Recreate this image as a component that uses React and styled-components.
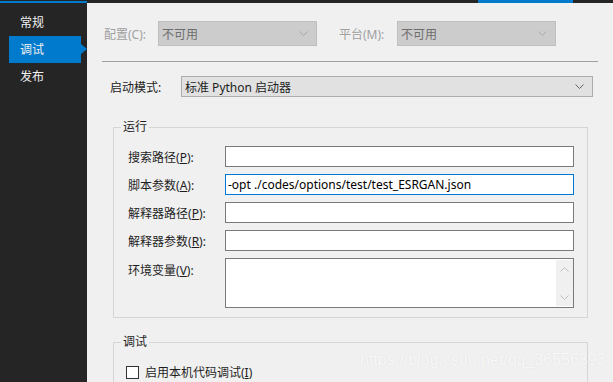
import styled, { createGlobalStyle } from 'styled-components';

const Global = createGlobalStyle`
  html, body { margin: 0; padding: 0; }
  body {
    width: 613px;
    height: 382px;
    overflow: hidden;
    background: #f0f0f0;
    font-family: "Noto Sans", "Noto Sans CJK SC", sans-serif;
    font-size: 12px;
    color: #1e1e1e;
  }
`;

const Window = styled.div`
  position: relative;
  width: 613px;
  height: 382px;
  display: flex;
  flex-direction: column;
  overflow: hidden;
`;

const Header = styled.div`
  display: flex;
  height: 3px;
  flex: none;
`;

const HeaderPart = styled.div`
  width: ${p => p.$w}px;
  flex: ${p => (p.$w ? 'none' : '1')};
  background: ${p => (p.$solid ? '#007acc' : '#252526')};
  border-bottom: 2px solid ${p => (p.$blue || p.$solid ? '#007acc' : '#252526')};
  box-sizing: border-box;
`;

const Body = styled.div`
  flex: 1;
  display: flex;
`;

const Sidebar = styled.div`
  width: 87px;
  flex: none;
  background: #252526;
  padding-top: 6px;
  display: flex;
  flex-direction: column;
`;

const NavItem = styled.div`
  position: relative;
  margin-left: 9px;
  width: 72px;
  height: 27px;
  line-height: 27px;
  padding-left: 11px;
  box-sizing: border-box;
  color: #f1f1f1;
  font-size: 12px;
  background: ${p => (p.$active ? '#007acc' : 'transparent')};

  &::after {
    content: '';
    display: ${p => (p.$active ? 'block' : 'none')};
    position: absolute;
    right: -6px;
    top: 8px;
    border-top: 5px solid transparent;
    border-bottom: 5px solid transparent;
    border-left: 6px solid #007acc;
  }
`;

const Content = styled.div`
  flex: 1;
  display: flex;
  flex-direction: column;
  background: #f0f0f0;
`;

const TopRow = styled.div`
  display: flex;
  align-items: center;
  margin-top: 18px;
  padding-left: 17px;
  height: 25px;
`;

const DimLabel = styled.span`
  color: #a0a0a0;
  width: ${p => p.$w}px;
  flex: none;
`;

const Combo = styled.div`
  width: ${p => p.$w}px;
  height: ${p => p.$h}px;
  box-sizing: border-box;
  flex: none;
  display: flex;
  align-items: center;
  justify-content: space-between;
  padding: 0 8px 0 3px;
  background: ${p => (p.$disabled ? '#cccccc' : '#e1e1e1')};
  border: 1px solid ${p => (p.$disabled ? '#bfbfbf' : '#adadad')};
  color: ${p => (p.$disabled ? '#6d6d6d' : '#1e1e1e')};
  margin-right: ${p => p.$mr || 0}px;
`;

const Chevron = ({ color }) => (
  <svg width="9" height="5" viewBox="0 0 9 5">
    <path d="M0.5 0.5 L4.5 4.5 L8.5 0.5" fill="none" stroke={color} strokeWidth="1" />
  </svg>
);

const Separator = styled.div`
  margin: 15px 0 0 15px;
  width: 496px;
  height: 1px;
  background: #a0a0a0;
`;

const ModeRow = styled.div`
  display: flex;
  align-items: center;
  margin-top: 14px;
  padding-left: 23px;
`;

const ModeLabel = styled.span`
  width: 71px;
  flex: none;
`;

const Group = styled.fieldset`
  margin: ${p => p.$mt}px 0 0 26px;
  width: 475px;
  box-sizing: border-box;
  padding: 0 0 ${p => p.$pb}px 14px;
  border: 1px solid #d5d5d5;
  min-inline-size: 0;
`;

const Legend = styled.legend`
  margin-left: -7px;
  padding: 0 2px;
  line-height: 16px;
  font-size: 12px;
`;

const FieldRow = styled.div`
  display: flex;
  align-items: ${p => (p.$top ? 'flex-start' : 'center')};
  margin-top: ${p => p.$mt}px;
`;

const FieldLabel = styled.span`
  width: 97px;
  flex: none;
  padding-top: ${p => (p.$top ? '3px' : '0')};
`;

const TextBox = styled.div`
  width: 349px;
  height: 21px;
  box-sizing: border-box;
  background: #ffffff;
  border: 1px solid ${p => (p.$focus ? '#0078d7' : '#7a7a7a')};
  padding-left: 2px;
  display: flex;
  align-items: center;
  color: #000;
`;

const AreaBox = styled.div`
  width: 349px;
  height: 50px;
  box-sizing: border-box;
  background: #ffffff;
  border: 1px solid #7a7a7a;
  display: flex;
  justify-content: flex-end;
`;

const ScrollTrack = styled.div`
  width: 17px;
  background: #f0f0f0;
  display: flex;
  flex-direction: column;
  justify-content: space-between;
  align-items: center;
  padding: 7px 0 6px;
  margin: 1px 0;
  box-sizing: border-box;
`;

const CheckRow = styled.div`
  display: flex;
  align-items: center;
  margin-top: 13px;
  margin-left: -2px;
`;

const CheckBox = styled.div`
  width: 13px;
  height: 13px;
  box-sizing: border-box;
  border: 1px solid #333333;
  background: #ffffff;
  margin-right: 6px;
`;

const Watermark = styled.div`
  position: absolute;
  left: 360px;
  top: 351px;
  font-family: "Liberation Sans", Arial, sans-serif;
  font-size: 16px;
  color: #f8f8f8;
  text-shadow: 0 0 1px #dadada;
  pointer-events: none;
`;

const Key = styled.u`
  text-underline-offset: 1px;
`;

const Lbl = ({ text, k }) => (
  <>
    {text}(<Key>{k}</Key>):
  </>
);

const App = () => (
  <Window>
    <Global />
    <Header>
      <HeaderPart $w={87} $blue />
      <HeaderPart $w={391} />
      <HeaderPart $w={95} $solid />
      <HeaderPart />
    </Header>
    <Body>
      <Sidebar>
        <NavItem>常规</NavItem>
        <NavItem $active>调试</NavItem>
        <NavItem>发布</NavItem>
      </Sidebar>
      <Content>
        <TopRow>
          <DimLabel $w={54}>配置(C):</DimLabel>
          <Combo $w={159} $h={25} $disabled $mr={22}>
            不可用
            <Chevron color="#a8a8a8" />
          </Combo>
          <DimLabel $w={58}>平台(M):</DimLabel>
          <Combo $w={159} $h={25} $disabled>
            不可用
            <Chevron color="#a8a8a8" />
          </Combo>
        </TopRow>
        <Separator />
        <ModeRow>
          <ModeLabel>启动模式:</ModeLabel>
          <Combo $w={412} $h={21}>
            标准 Python 启动器
            <Chevron color="#606060" />
          </Combo>
        </ModeRow>
        <Group $mt={22} $pb={9}>
          <Legend>运行</Legend>
          <FieldRow $mt={11}>
            <FieldLabel><Lbl text="搜索路径" k="P" /></FieldLabel>
            <TextBox />
          </FieldRow>
          <FieldRow $mt={7}>
            <FieldLabel><Lbl text="脚本参数" k="A" /></FieldLabel>
            <TextBox $focus>-opt ./codes/options/test/test_ESRGAN.json</TextBox>
          </FieldRow>
          <FieldRow $mt={7}>
            <FieldLabel><Lbl text="解释器路径" k="P" /></FieldLabel>
            <TextBox />
          </FieldRow>
          <FieldRow $mt={7}>
            <FieldLabel><Lbl text="解释器参数" k="R" /></FieldLabel>
            <TextBox />
          </FieldRow>
          <FieldRow $mt={7} $top>
            <FieldLabel $top><Lbl text="环境变量" k="V" /></FieldLabel>
            <AreaBox>
              <ScrollTrack>
                <svg width="9" height="5" viewBox="0 0 9 5">
                  <path d="M0.5 4.5 L4.5 0.5 L8.5 4.5" fill="none" stroke="#c2c2c2" />
                </svg>
                <Chevron color="#c2c2c2" />
              </ScrollTrack>
            </AreaBox>
          </FieldRow>
        </Group>
        <Group $mt={16} $pb={40}>
          <Legend>调试</Legend>
          <CheckRow>
            <CheckBox />
            启用本机代码调试(<Key>I</Key>)
          </CheckRow>
        </Group>
      </Content>
    </Body>
    <Watermark>https://blog.csdn.net/qq_36556893</Watermark>
  </Window>
);

export default App;
